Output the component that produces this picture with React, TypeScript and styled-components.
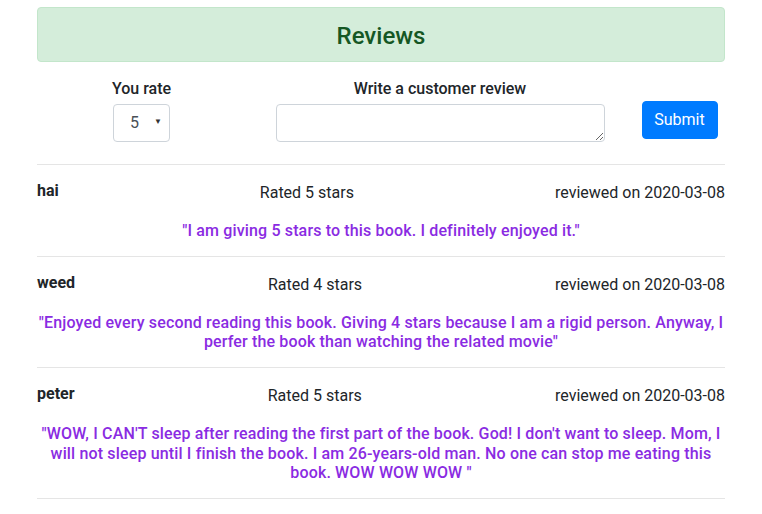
import React from "react";
import styled, { createGlobalStyle } from "styled-components";

const GlobalStyle = createGlobalStyle`
  html, body { margin: 0; padding: 0; background: #fff; }
  body {
    font-family: Roboto, "Liberation Sans", Arial, sans-serif;
    font-size: 16px;
    line-height: 1.5;
    color: #212529;
  }
  * { box-sizing: border-box; }
`;

const Page = styled.div`
  padding: 7px 37px 0;
`;

const Alert = styled.div`
  background: #d4edda;
  border: 1px solid #c3e6cb;
  border-radius: 4px;
  padding: 14px 20px 10px;
  margin-bottom: 15px;
  text-align: center;
`;

const Title = styled.h4`
  margin: 0;
  font-size: 24px;
  font-weight: 500;
  line-height: 1.2;
  color: #155724;
`;

const Form = styled.form`
  display: grid;
  grid-template-columns: 209px 388px 1fr;
  justify-items: center;
  align-items: end;
  margin-bottom: 22px;
`;

const Group = styled.div`
  display: flex;
  flex-direction: column;
  align-items: center;
`;

const Label = styled.label`
  display: block;
  line-height: 24px;
  margin-bottom: 3px;
  font-weight: 500;
`;

const SelectBox = styled.div`
  position: relative;
  width: 57px;
  height: 38px;
`;

const Select = styled.select`
  appearance: none;
  -webkit-appearance: none;
  width: 100%;
  height: 100%;
  border: 1px solid #ced4da;
  border-radius: 4px;
  background: #fff;
  color: #495057;
  font-family: inherit;
  font-size: 16px;
  padding: 0 0 0 16px;
  outline: none;
`;

const Caret = styled.span`
  position: absolute;
  right: 8px;
  top: 14px;
  font-size: 8px;
  line-height: 1;
  color: #333;
  pointer-events: none;
`;

const TextArea = styled.textarea`
  display: block;
  width: 329px;
  height: 38px;
  border: 1px solid #ced4da;
  border-radius: 4px;
  font-family: inherit;
  font-size: 16px;
  padding: 6px 12px;
  margin: 0;
  outline: none;
`;

const Button = styled.button`
  background: #007bff;
  border: 1px solid #007bff;
  color: #fff;
  border-radius: 4px;
  width: 76px;
  height: 38px;
  font-family: inherit;
  font-size: 16px;
  padding: 0;
  margin-bottom: 3px;
  cursor: pointer;
`;

const List = styled.div`
  border-bottom: 1px solid rgba(0, 0, 0, 0.1);
`;

const Review = styled.div`
  border-top: 1px solid rgba(0, 0, 0, 0.1);
  padding: 16px 0;
`;

const Header = styled.div`
  display: flex;
  justify-content: space-between;
  align-items: flex-start;
  margin-bottom: 16px;
`;

const Name = styled.h6`
  margin: 0;
  font-size: 16px;
  font-weight: 700;
  line-height: 1.2;
`;

const Meta = styled.span`
  line-height: 24px;
`;

const Body = styled.p`
  margin: 0;
  text-align: center;
  color: blueviolet;
  font-weight: 500;
  line-height: 1.2;
  letter-spacing: 0.15px;
`;

const reviews = [
  {
    name: "hai",
    rating: 5,
    date: "2020-03-08",
    text: '"I am giving 5 stars to this book. I definitely enjoyed it."',
  },
  {
    name: "weed",
    rating: 4,
    date: "2020-03-08",
    text: '"Enjoyed every second reading this book. Giving 4 stars because I am a rigid person. Anyway, I perfer the book than watching the related movie"',
  },
  {
    name: "peter",
    rating: 5,
    date: "2020-03-08",
    text: "\"WOW, I CAN'T sleep after reading the first part of the book. God! I don't want to sleep. Mom, I will not sleep until I finish the book. I am 26-years-old man. No one can stop me eating this book. WOW WOW WOW \"",
  },
];

export default function App() {
  return (
    <>
      <GlobalStyle />
      <Page>
        <Alert>
          <Title>Reviews</Title>
        </Alert>
        <Form onSubmit={(e) => e.preventDefault()}>
          <Group>
            <Label>You rate</Label>
            <SelectBox>
              <Select defaultValue="5">
                <option value="1">1</option>
                <option value="2">2</option>
                <option value="3">3</option>
                <option value="4">4</option>
                <option value="5">5</option>
              </Select>
              <Caret>▼</Caret>
            </SelectBox>
          </Group>
          <Group>
            <Label>Write a customer review</Label>
            <TextArea />
          </Group>
          <Button type="submit">Submit</Button>
        </Form>
        <List>
          {reviews.map((r) => (
            <Review key={r.name}>
              <Header>
                <Name>{r.name}</Name>
                <Meta>Rated {r.rating} stars</Meta>
                <Meta>reviewed on {r.date}</Meta>
              </Header>
              <Body>{r.text}</Body>
            </Review>
          ))}
        </List>
      </Page>
    </>
  );
}
